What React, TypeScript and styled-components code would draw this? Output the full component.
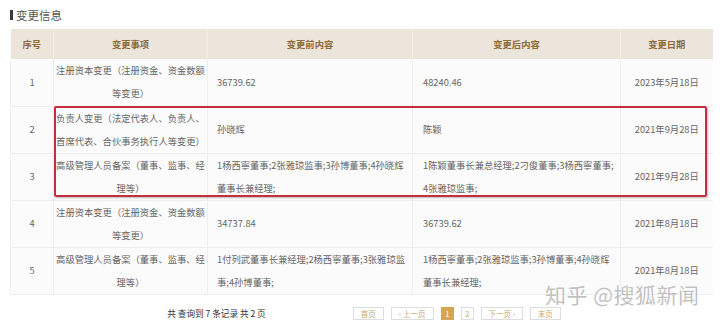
import React from "react";
import styled, { createGlobalStyle } from "styled-components";

const GlobalStyle = createGlobalStyle`
  html, body {
    margin: 0;
    padding: 0;
    background: #fff;
  }
  body {
    font-family: "Noto Sans CJK SC", "Microsoft YaHei", sans-serif;
  }
`;

const Page = styled.div`
  position: relative;
  width: 720px;
  height: 325px;
  overflow: hidden;
  box-sizing: border-box;
  padding: 8px 8px 0 10px;
`;

const Title = styled.div`
  display: flex;
  align-items: center;
  gap: 3px;
  height: 14px;
  font-size: 11.5px;
  line-height: 14px;
  color: #555;
`;

const TitleBar = styled.span`
  width: 3px;
  height: 10px;
  background: #3a3a3a;
`;

const TableWrap = styled.div`
  position: relative;
  width: 702px;
  margin-top: 7px;
`;

const Table = styled.table`
  width: 702px;
  table-layout: fixed;
  border-collapse: collapse;
  font-size: 9.3px;
  color: #666;
`;

const HeadCell = styled.th`
  height: 30px;
  padding: 0;
  background: #ece5dc;
  color: #8d6a36;
  font-weight: 600;
  font-size: 9.3px;
  text-align: center;
  border-left: 1px solid #f3eee8;
  &:first-child {
    border-left: none;
  }
`;

const Row = styled.tr`
  height: 47px;
  border-bottom: 1px solid #eeeeee;
  background: #fbfbfb;
`;

const Cell = styled.td<{ $align?: "left" | "center"; $padL?: number }>`
  padding: 0 2px 0 ${(p) => p.$padL ?? 2}px;
  text-align: ${(p) => p.$align ?? "left"};
  line-height: 23px;
  vertical-align: middle;
  border-left: 1px solid #eeeeee;
  &:first-child {
    border-left: 1px solid #f0f0f0;
  }
`;

const Line = styled.div`
  white-space: nowrap;
`;

const Highlight = styled.div`
  position: absolute;
  left: 44px;
  top: 77px;
  width: 653px;
  height: 91px;
  box-sizing: border-box;
  border: 2px solid #c52f3d;
  border-radius: 2px;
  box-shadow: 1px 1px 2px rgba(0, 0, 0, 0.25);
  pointer-events: none;
`;

const Pager = styled.div`
  display: flex;
  align-items: center;
  justify-content: center;
  gap: 87px;
  margin-top: 12px;
  padding-left: 6px;
`;

const Summary = styled.div`
  font-size: 8.6px;
  color: #333;
  white-space: nowrap;
`;

const Buttons = styled.div`
  display: flex;
  align-items: center;
  gap: 7px;
`;

const PageBtn = styled.span<{ $active?: boolean; $w: number }>`
  display: flex;
  align-items: center;
  justify-content: center;
  width: ${(p) => p.$w}px;
  height: 13px;
  box-sizing: border-box;
  border: 1px solid ${(p) => (p.$active ? "#d3a655" : "#dddddd")};
  background: ${(p) => (p.$active ? "#d3a655" : "#fff")};
  color: ${(p) => (p.$active ? "#fff" : "#c9a86a")};
  font-size: 7.5px;
  white-space: nowrap;
`;

const Watermark = styled.div`
  position: absolute;
  left: 545px;
  top: 279px;
  font-size: 21px;
  letter-spacing: 0.5px;
  color: rgba(140, 140, 140, 0.55);
  text-shadow: 0 0 2px rgba(255, 255, 255, 0.9);
  white-space: nowrap;
`;

type Change = {
  no: number;
  item: string[];
  before: string[];
  after: string[];
  date: string;
};

const changes: Change[] = [
  {
    no: 1,
    item: ["注册资本变更（注册资金、资金数额", "等变更）"],
    before: ["36739.62"],
    after: ["48240.46"],
    date: "2023年5月18日",
  },
  {
    no: 2,
    item: ["负责人变更（法定代表人、负责人、", "首席代表、合伙事务执行人等变更）"],
    before: ["孙晓辉"],
    after: ["陈颖"],
    date: "2021年9月28日",
  },
  {
    no: 3,
    item: ["高级管理人员备案（董事、监事、经", "理等）"],
    before: ["1杨西寧董事;2张雅琼监事;3孙博董事;4孙晓辉", "董事长兼经理;"],
    after: ["1陈颖董事长兼总经理;2刁俊董事;3杨西寧董事;", "4张雅琼监事;"],
    date: "2021年9月28日",
  },
  {
    no: 4,
    item: ["注册资本变更（注册资金、资金数额", "等变更）"],
    before: ["34737.84"],
    after: ["36739.62"],
    date: "2021年8月18日",
  },
  {
    no: 5,
    item: ["高级管理人员备案（董事、监事、经", "理等）"],
    before: ["1付列武董事长兼经理;2杨西寧董事;3张雅琼监", "事;4孙博董事;"],
    after: ["1杨西寧董事;2张雅琼监事;3孙博董事;4孙晓辉", "董事长兼经理;"],
    date: "2021年8月18日",
  },
];

const Lines = ({ lines }: { lines: string[] }) => (
  <>
    {lines.map((l, i) => (
      <Line key={i}>{l}</Line>
    ))}
  </>
);

export default function App() {
  return (
    <Page>
      <GlobalStyle />
      <Title>
        <TitleBar />
        变更信息
      </Title>
      <TableWrap>
        <Table>
          <colgroup>
            <col style={{ width: 43 }} />
            <col style={{ width: 154 }} />
            <col style={{ width: 205 }} />
            <col style={{ width: 208 }} />
            <col style={{ width: 92 }} />
          </colgroup>
          <thead>
            <tr>
              <HeadCell>序号</HeadCell>
              <HeadCell>变更事项</HeadCell>
              <HeadCell>变更前内容</HeadCell>
              <HeadCell>变更后内容</HeadCell>
              <HeadCell>变更日期</HeadCell>
            </tr>
          </thead>
          <tbody>
            {changes.map((c) => (
              <Row key={c.no}>
                <Cell $align="center">{c.no}</Cell>
                <Cell $align="center">
                  <Lines lines={c.item} />
                </Cell>
                <Cell $padL={9}>
                  <Lines lines={c.before} />
                </Cell>
                <Cell $padL={10}>
                  <Lines lines={c.after} />
                </Cell>
                <Cell $align="center">{c.date}</Cell>
              </Row>
            ))}
          </tbody>
        </Table>
        <Highlight />
      </TableWrap>
      <Pager>
        <Summary>共 查询到 7 条记录 共 2 页</Summary>
        <Buttons>
          <PageBtn $w={31}>首页</PageBtn>
          <PageBtn $w={43}>‹ 上一页</PageBtn>
          <PageBtn $w={13} $active>
            1
          </PageBtn>
          <PageBtn $w={13}>2</PageBtn>
          <PageBtn $w={42}>下一页 ›</PageBtn>
          <PageBtn $w={31}>末页</PageBtn>
        </Buttons>
      </Pager>
      <Watermark>知乎 @搜狐新闻</Watermark>
    </Page>
  );
}
